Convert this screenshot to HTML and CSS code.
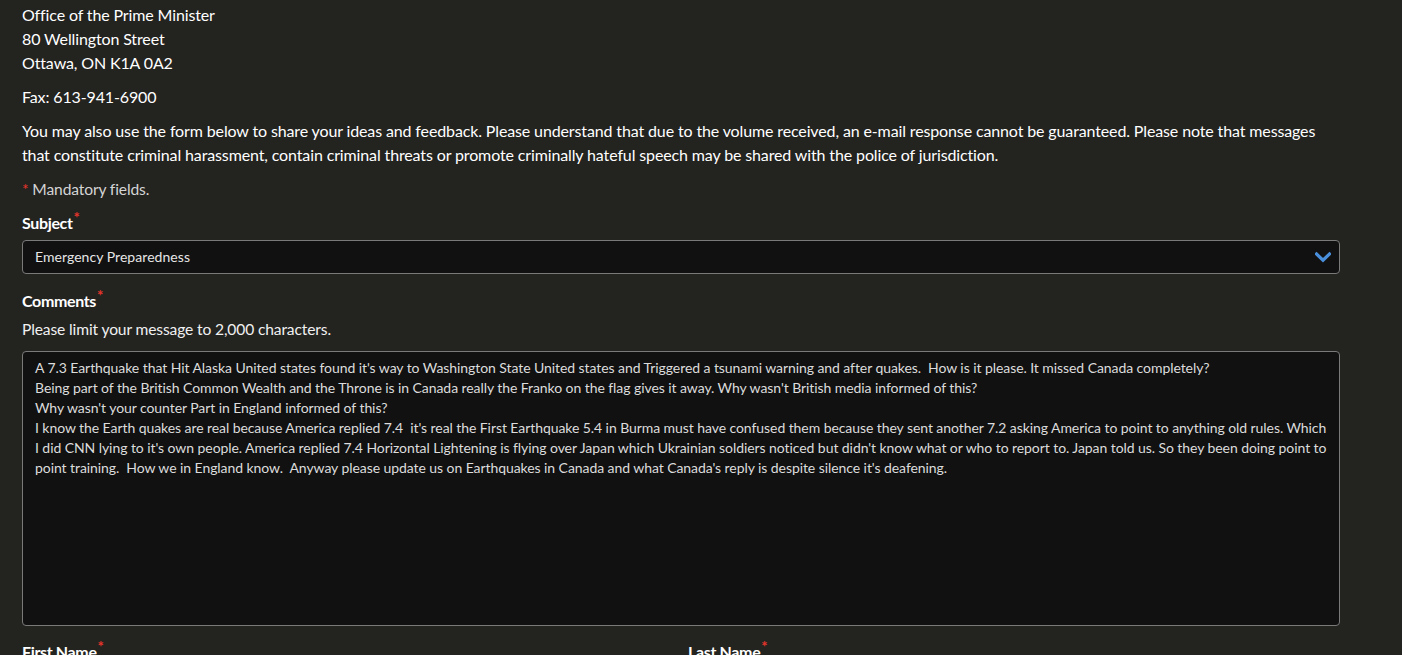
FILE: index.html
```html
<!DOCTYPE html>
<html lang="en">
<head>
<meta charset="utf-8">
<link rel="stylesheet" href="styles.css">
</head>
<body>
<main class="page">
  <p class="address">Office of the Prime Minister<br>80 Wellington Street<br>Ottawa, ON K1A 0A2</p>
  <p class="para">Fax: 613-941-6900</p>
  <p class="para">You may also use the form below to share your ideas and feedback. Please understand that due to the volume received, an e-mail response cannot be guaranteed. Please note that messages that constitute criminal harassment, contain criminal threats or promote criminally hateful speech may be shared with the police of jurisdiction.</p>
  <p class="mandatory"><span class="req">*</span> Mandatory fields.</p>

  <div class="field">
    <label class="label">Subject<span class="req sup">*</span></label>
    <div class="select">
      <span>Emergency Preparedness</span>
      <svg class="chev" width="16" height="12" viewBox="0 0 16 12"><path d="M1.5 3 L8 9.2 L14.5 3" fill="none" stroke="#4a8fdc" stroke-width="3.2" stroke-linecap="square"/></svg>
    </div>
  </div>

  <div class="field">
    <label class="label">Comments<span class="req sup">*</span></label>
    <p class="hint">Please limit your message to 2,000 characters.</p>
    <div class="textarea">A 7.3 Earthquake that Hit Alaska United states found it's way to Washington State United states and Triggered a tsunami warning and after quakes.&nbsp; How is it please. It missed Canada completely?<br>Being part of the British Common Wealth and the Throne is in Canada really the Franko on the flag gives it away. Why wasn't British media informed of this?<br>Why wasn't your counter Part in England informed of this?<br>I know the Earth quakes are real because America replied 7.4&nbsp; it's real the First Earthquake 5.4 in Burma must have confused them because they sent another 7.2 asking America to point to anything old rules. Which I did CNN lying to it's own people. America replied 7.4 Horizontal Lightening is flying over Japan which Ukrainian soldiers noticed but didn't know what or who to report to. Japan told us. So they been doing point to point training.&nbsp; How we in England know.&nbsp; Anyway please update us on Earthquakes in Canada and what Canada's reply is despite silence it's deafening.</div>
  </div>

  <div class="names">
    <label class="label">First Name<span class="req sup">*</span></label>
    <label class="label">Last Name<span class="req sup">*</span></label>
  </div>
</main>
</body>
</html>
```

FILE: styles.css
```css
html, body {
  margin: 0;
  padding: 0;
  background: #232320;
}
body {
  font-family: Lato, "Noto Sans", sans-serif;
  color: #ffffff;
  font-size: 16px;
  line-height: 24px;
  letter-spacing: -0.13px;
}
.page {
  width: 1318px;
  padding: 3px 0 0 22px;
}
p { margin: 0; }
.address { margin-bottom: 10px; }
.para { margin-bottom: 10px; }
.mandatory {
  color: #d4d4d4;
  font-size: 15.6px;
  line-height: 24px;
  margin-top: 7px;
  margin-bottom: 10px;
}
.req { color: #e8352b; }
.sup {
  font-size: 15px;
  vertical-align: top;
  line-height: 15px;
  position: relative;
  top: -1px;
  margin-left: 1px;
  letter-spacing: 0;
}
.label {
  display: block;
  font-weight: 700;
  letter-spacing: -0.35px;
  line-height: 24px;
}
.field { margin-bottom: 14px; }
.select {
  margin-top: 5px;
  height: 32px;
  border: 1px solid #7a7a7a;
  border-radius: 4px;
  background: #111111;
  display: flex;
  align-items: center;
  justify-content: space-between;
  padding: 0 8px 0 12px;
  font-size: 14px;
  letter-spacing: 0.05px;
  color: #e6e6e6;
  margin-bottom: 15px;
}
.chev { display: block; }
.hint { margin-top: 4px; color: #f0f0f0; font-size: 15.6px; }
.textarea {
  margin-top: 10px;
  height: 261px;
  border: 1px solid #7a7a7a;
  border-radius: 4px;
  background: #111111;
  padding: 6px 12px 6px 12px;
  font-size: 14px;
  letter-spacing: -0.07px;
  line-height: 20px;
  color: #dcdcdc;
}
.names {
  display: grid;
  grid-template-columns: 666px 1fr;
  margin-top: 1px;
}
```
